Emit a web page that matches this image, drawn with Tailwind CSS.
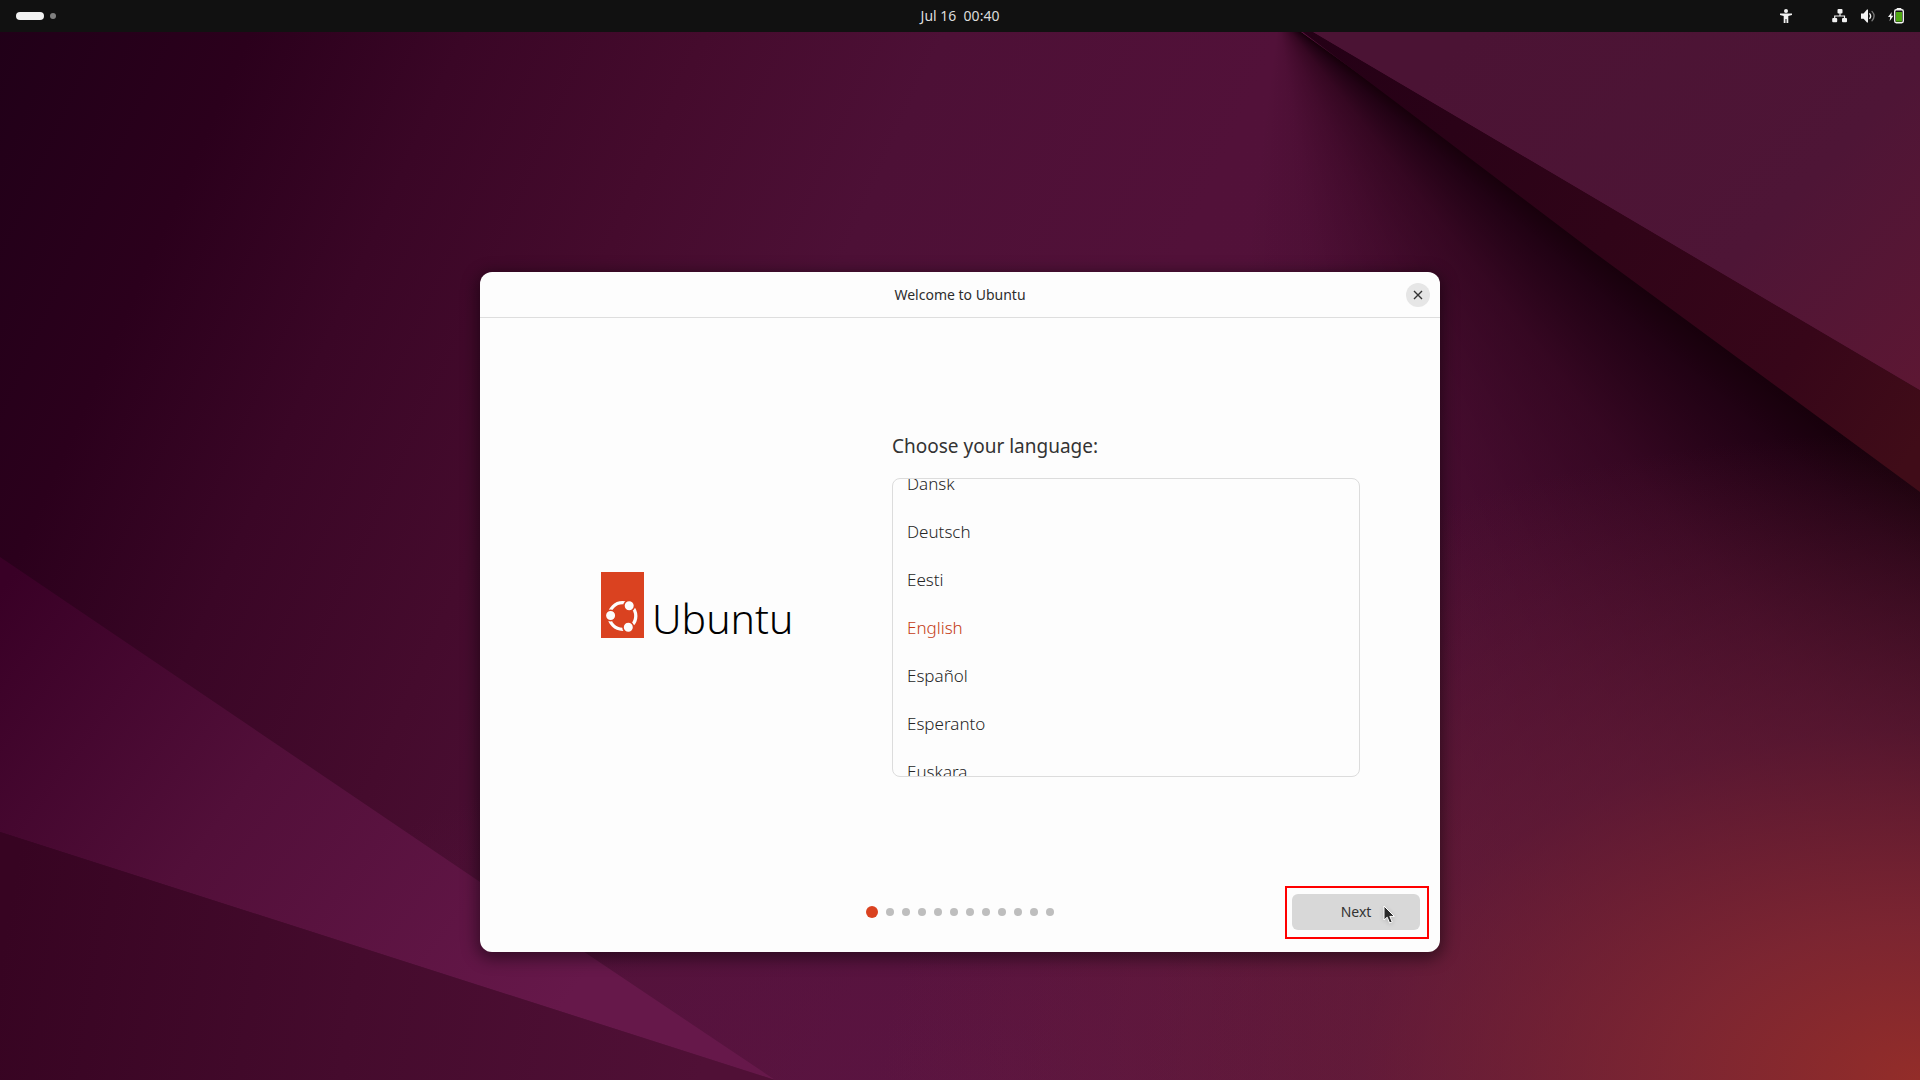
<!DOCTYPE html>
<html lang="en">
<head>
<meta charset="utf-8">
<meta name="viewport" content="width=device-width, initial-scale=1">
<title>Welcome to Ubuntu</title>
<script src="https://cdn.jsdelivr.net/npm/@tailwindcss/browser@4"></script>
</head>
<body class="relative isolate flex min-h-screen flex-col overflow-hidden bg-[#3d0828] font-['Noto_Sans',sans-serif] text-sm text-[#333]">

<!-- Wallpaper -->
<div class="absolute inset-0 -z-10 bg-[linear-gradient(114deg,#200018_0%,#2b001c_11%,#3a0626_20%,#450b2d_30%,#4d1036_40%,#521139_54%,#54123c_100%)]" aria-hidden="true">
  <div class="absolute inset-0 bg-[radial-gradient(ellipse_40%_34%_at_50%_100%,#60164699_0%,#60164666_40%,#60164600_100%)]"></div>
  <div class="absolute inset-0 bg-[conic-gradient(from_0deg_at_66.6%_1.5%,#16000a00_0deg,#16000a00_125deg,#16000a_126deg,#1c0010e6_131deg,#22001299_142deg,#26001459_156deg,#2600141a_172deg,#26001400_188deg)]"></div>
  <div class="absolute inset-0 bg-[radial-gradient(ellipse_54%_60%_at_100%_100%,#932d29_0%,#822832e6_24%,#6c203899_54%,#5c184000_100%)]"></div>
  <svg class="absolute inset-0 size-full" viewBox="0 0 1920 1080" preserveAspectRatio="none">
    <defs>
      <linearGradient id="foldTop" gradientUnits="userSpaceOnUse" x1="1500" y1="0" x2="1920" y2="400">
        <stop offset="0" stop-color="#4b1334"/><stop offset=".6" stop-color="#4e1536"/><stop offset="1" stop-color="#5d1733"/>
      </linearGradient>
      <linearGradient id="foldEdge" gradientUnits="userSpaceOnUse" x1="1300" y1="20" x2="1920" y2="440">
        <stop offset="0" stop-color="#240016"/><stop offset=".5" stop-color="#300418"/><stop offset=".8" stop-color="#370619"/><stop offset="1" stop-color="#400c18"/>
      </linearGradient>
      <linearGradient id="band" gradientUnits="userSpaceOnUse" x1="0" y1="590" x2="560" y2="1010">
        <stop offset="0" stop-color="#390026"/><stop offset=".45" stop-color="#520f39"/><stop offset="1" stop-color="#66184a"/>
      </linearGradient>
      <linearGradient id="floor" gradientUnits="userSpaceOnUse" x1="0" y1="960" x2="700" y2="1080">
        <stop offset="0" stop-color="#370422"/><stop offset=".5" stop-color="#450b2d"/><stop offset="1" stop-color="#501036"/>
      </linearGradient>
    </defs>
    <path fill="url(#foldEdge)" d="M1259 0 L1920 390 V492 L1595 253 L1397 103 L1300 30 Z"/>
    <path fill="url(#foldTop)" d="M1259 0 H1920 V390 Z"/>
    <path fill="url(#band)" d="M0 557 L480 882 L775 1080 L0 832 Z"/>
    <path fill="url(#floor)" d="M0 832 L775 1080 H0 Z"/>
  </svg>
</div>

<header class="grid h-8 grid-cols-[1fr_auto_1fr] items-center bg-[#111] px-4 text-[#f2f2f2]">
  <button type="button" class="flex w-max items-center gap-1.5" aria-label="Activities">
    <span class="h-2 w-7 rounded-full bg-[#f2f2f2]"></span>
    <span class="size-1.5 rounded-full bg-[#808080]"></span>
  </button>
  <time class="whitespace-pre leading-[30px] text-[#ddd]">Jul 16  00:40</time>
  <div class="flex items-center justify-end gap-3">
    <button type="button" class="mr-[26px]" aria-label="Accessibility">
      <svg class="size-4" viewBox="0 0 16 16" fill="#f2f2f2"><circle cx="8" cy="3" r="2"/><path d="M2 5.5 H14 V7 L10.3 8 V15 H8.5 V11 H7.5 V15 H5.7 V8 L2 7 Z"/></svg>
    </button>
    <button type="button" aria-label="Wired network">
      <svg class="size-4" viewBox="0 0 16 16" fill="#f2f2f2"><rect x="5.5" y="1" width="5" height="4.6" rx="1"/><rect x="0.2" y="10" width="5" height="4.2" rx="1"/><rect x="10" y="10" width="5" height="4.2" rx="1"/><path d="M8 5 V8 M2.7 10.5 V8 H12.5 V10.5" fill="none" stroke="#f2f2f2" stroke-width="1.2"/></svg>
    </button>
    <button type="button" aria-label="Volume">
      <svg class="size-4" viewBox="0 0 16 16" fill="none" stroke-width="1.3" stroke-linecap="round"><path fill="#f2f2f2" d="M1 5.5 H3.6 L7 1.5 H8 V14.5 H7 L3.6 10.8 H1 Z"/><path stroke="#f2f2f2" d="M9.8 5.8 Q11.6 8 9.8 10.4"/><path stroke="#777" d="M12 3.4 Q16.2 8 12 12.7"/></svg>
    </button>
    <button type="button" aria-label="Battery charging">
      <svg class="size-4" viewBox="0 0 16 16"><path fill="#f2f2f2" d="M3.8 4 L0 9 H2.2 L1.6 13.2 L5.4 7.8 H3.2 Z"/><rect x="6.7" y="1.7" width="8.6" height="13" rx="1.6" fill="#111" stroke="#f2f2f2" stroke-width="1.4"/><rect x="8.7" y="0" width="4.6" height="1.6" fill="#f2f2f2"/><rect x="8" y="4" width="6" height="9.6" fill="#4fa812"/></svg>
    </button>
  </div>
</header>

<main class="flex flex-1 flex-col items-center pt-60 pb-32">
  <section class="w-1/2 rounded-xl bg-[#fdfdfd] shadow-[0_4px_16px_3px_rgba(0,0,0,0.45)]" aria-labelledby="title">
    <div class="grid h-[46px] grid-cols-[1fr_auto_1fr] items-center border-b border-[#dedede] px-2.5">
      <h1 id="title" class="col-start-2 text-[#2d2d2d]">Welcome to Ubuntu</h1>
      <button type="button" class="flex size-6 items-center justify-center justify-self-end rounded-full bg-[#e6e6e6]" aria-label="Close">
        <svg class="size-4" viewBox="0 0 16 16" fill="none" stroke="#333" stroke-width="1.4"><path d="M4 4 L12 12 M12 4 L4 12"/></svg>
      </button>
    </div>

    <div class="flex h-[570px] items-center">
      <div class="flex w-[412px] shrink-0 items-end gap-2 pt-1 pl-[121px]">
        <svg class="h-[66px] w-[43px] shrink-0" viewBox="0 0 43 66" aria-hidden="true">
          <rect width="43" height="66" fill="#da4220"/>
          <circle cx="21.5" cy="44" r="13.3" fill="none" stroke="#fdfdfd" stroke-width="3.3"/>
          <g fill="#fdfdfd" stroke="#da4220" stroke-width="1.6"><circle cx="9.6" cy="43.5" r="5.3"/><circle cx="28.2" cy="33.7" r="5.3"/><circle cx="27.3" cy="55.3" r="5.3"/></g>
        </svg>
        <p class="text-[41px] leading-10 font-light text-black">Ubuntu</p>
      </div>
      <div class="min-w-0 flex-1 pr-20">
        <h2 id="prompt" class="mb-4 text-[19px] leading-8 text-[#333]">Choose your language:</h2>
        <ul class="flex h-[299px] flex-col justify-center overflow-hidden rounded-lg border border-[#dcdcdc] px-3.5 text-[17px] font-light text-[#262626]" role="listbox" aria-labelledby="prompt">
          <li class="h-12 shrink-0 leading-[50px]" role="option">Dansk</li>
          <li class="h-12 shrink-0 leading-[50px]" role="option">Deutsch</li>
          <li class="h-12 shrink-0 leading-[50px]" role="option">Eesti</li>
          <li class="h-12 shrink-0 leading-[50px] text-[#c43c16]" role="option" aria-selected="true">English</li>
          <li class="h-12 shrink-0 leading-[50px]" role="option">Español</li>
          <li class="h-12 shrink-0 leading-[50px]" role="option">Esperanto</li>
          <li class="h-12 shrink-0 leading-[50px]" role="option">Euskara</li>
        </ul>
      </div>
    </div>

    <footer class="grid grid-cols-[1fr_auto_1fr] items-center px-5 pt-1.5 pb-[22px]">
      <div class="col-start-2 flex items-center gap-2" role="img" aria-label="Step 1 of 12">
        <span class="size-3 rounded-full bg-[#da4220]"></span>
        <span class="size-2 rounded-full bg-[#bebebe]"></span>
        <span class="size-2 rounded-full bg-[#bebebe]"></span>
        <span class="size-2 rounded-full bg-[#bebebe]"></span>
        <span class="size-2 rounded-full bg-[#bebebe]"></span>
        <span class="size-2 rounded-full bg-[#bebebe]"></span>
        <span class="size-2 rounded-full bg-[#bebebe]"></span>
        <span class="size-2 rounded-full bg-[#bebebe]"></span>
        <span class="size-2 rounded-full bg-[#bebebe]"></span>
        <span class="size-2 rounded-full bg-[#bebebe]"></span>
        <span class="size-2 rounded-full bg-[#bebebe]"></span>
        <span class="size-2 rounded-full bg-[#bebebe]"></span>
      </div>
      <div class="relative justify-self-end">
        <button type="button" class="h-9 w-32 rounded-md bg-[#d8d8d8] text-[#333]">Next</button>
        <span class="pointer-events-none absolute -top-2 -right-[9px] -bottom-[9px] -left-[7px] border-2 border-[#ff0000]" aria-hidden="true"></span>
        <svg class="pointer-events-none absolute top-[11px] left-[91px] h-5 w-[14px] drop-shadow-sm" viewBox="0 0 14 20" aria-hidden="true"><path fill="#2b2b2b" stroke="#fff" stroke-width="1" d="M1 1 V15 L4.2 12.2 L6.6 18 L9.2 16.8 L6.8 11.4 H11.4 Z"/></svg>
      </div>
    </footer>
  </section>
</main>
</body>
</html>
